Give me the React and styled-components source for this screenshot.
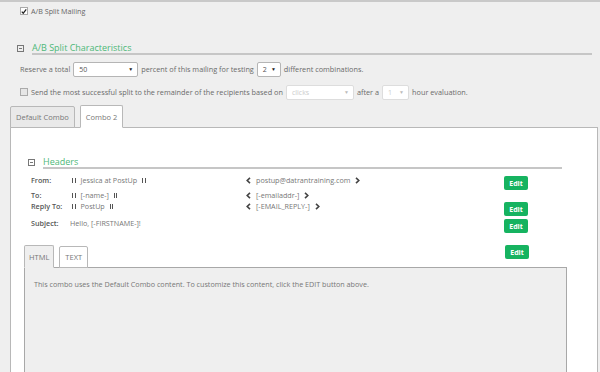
import React from 'react'
import styled, { createGlobalStyle } from 'styled-components';

const Global = createGlobalStyle`
    html, body {
        margin: 0;
        padding: 0;
        background: #efefef;
        font-family: "Open Sans", "Liberation Sans", sans-serif;
        color: #6a6a6a;
    }
`;

const Page = styled.div`
    width: 600px;
    height: 372px;
    overflow: hidden;
    border-top: 2px solid #c9c9c9;
    box-sizing: border-box;
    display: flex;
    flex-direction: column;
`;

const CheckRow = styled.label`
    display: flex;
    align-items: center;
    gap: 3px;
    padding: 4px 0 0 20px;
    height: 10px;
    font-size: 7.2px;
    color: #666;
`;

const Box = styled.span`
    width: 6px;
    height: 6px;
    border: 1px solid #aaa;
    background: ${p => (p.checked ? '#fff' : '#e6e6e6')};
    display: inline-flex;
    align-items: center;
    justify-content: center;
    flex: none;

    svg {
        width: 7px;
        height: 7px;
    }
`;

const SectionHead = styled.div`
    display: flex;
    align-items: flex-end;
    gap: 8px;
    margin: ${p => p.margin};
`;

const Toggle = styled.span`
    width: 5px;
    height: 5px;
    border: 1px solid #777;
    position: relative;
    margin-bottom: 3px;
    flex: none;

    &::after {
        content: '';
        position: absolute;
        left: 1px;
        right: 1px;
        top: 2px;
        height: 1px;
        background: #777;
    }
`;

const SectionTitle = styled.div`
    flex: 1;
    color: #4db878;
    font-size: 9px;
    line-height: 11px;
    border-bottom: 2px solid #c6c6c6;
`;

const FormRow = styled.div`
    display: flex;
    align-items: center;
    gap: 3px;
    padding-left: 20px;
    height: 16px;
    font-size: 7.3px;
    margin-top: ${p => p.top || 0}px;
`;

const Select = styled.span`
    display: inline-flex;
    align-items: center;
    justify-content: space-between;
    box-sizing: border-box;
    width: ${p => p.w}px;
    height: 15px;
    padding: 0 4px 0 5px;
    background: #fff;
    border: 1px solid ${p => (p.disabled ? '#ddd' : '#b5b5b5')};
    border-radius: 2px;
    color: ${p => (p.disabled ? '#ccc' : '#555')};
    font-size: 7px;

    &::after {
        content: '▼';
        font-size: 5px;
        color: ${p => (p.disabled ? '#bbb' : '#222')};
    }
`;

const TabBar = styled.div`
    display: flex;
    align-items: flex-end;
    gap: 5px;
    margin: ${p => p.margin};
    position: relative;
    z-index: 1;
`;

const Tab = styled.div`
    box-sizing: border-box;
    height: ${p => (p.active ? 23 : 22)}px;
    padding: 0 ${p => p.pad || 5}px;
    display: flex;
    align-items: center;
    font-size: 7.5px;
    color: #777;
    background: ${p => p.bg};
    border: 1px solid #b8b8b8;
    border-bottom: ${p => (p.active ? `1px solid ${p.bg}` : '1px solid #b8b8b8')};
    border-radius: 2px 2px 0 0;
    margin-bottom: -1px;
`;

const Panel = styled.div`
    flex: 1;
    margin: 0 2px 0 10px;
    background: #fff;
    border: 1px solid #b8b8b8;
    border-bottom: none;
    display: flex;
    flex-direction: column;
    padding: 28px 0 0 13px;
`;

const HeaderGrid = styled.div`
    display: grid;
    grid-template-columns: 41px 174px 258px 24px;
    grid-template-rows: 15px 11px 12px 18px;
    margin: 6px 0 0 7px;
    font-size: 7.2px;
`;

const Label = styled.span`
    grid-row: ${p => p.r};
    font-weight: 600;
    color: #555;
    line-height: 10px;
    align-self: start;
    margin-top: ${p => p.top || 0}px;
    white-space: nowrap;
`;

const Value = styled.span`
    grid-row: ${p => p.r};
    display: flex;
    align-items: center;
    gap: 5px;
    line-height: 10px;
    height: 10px;
    align-self: start;
    margin-top: ${p => p.top || 0}px;
    margin-left: ${p => p.left || 0}px;
    color: #777;
    white-space: nowrap;
`;

const Bars = styled.span`
    width: 1.5px;
    height: 5px;
    border-left: 1.5px solid #555;
    border-right: 1.5px solid #555;
`;

const Chevron = ({ dir }) => (
    <svg width="5" height="7" viewBox="0 0 5 7">
        <path
            d={dir === 'left' ? 'M4 0.8 L1.2 3.5 L4 6.2' : 'M1 0.8 L3.8 3.5 L1 6.2'}
            fill="none"
            stroke="#444"
            strokeWidth="1.6"
        />
    </svg>
);

const EditButton = styled.span`
    width: 24px;
    height: 14px;
    box-sizing: border-box;
    background: #16b360;
    color: #fff;
    font-size: 7px;
    font-weight: 700;
    border-radius: 2px;
    display: flex;
    align-items: center;
    justify-content: center;
    align-self: start;
    grid-column: 4;
    grid-row: ${p => p.r || 'auto'};
    margin-top: ${p => p.top || 0}px;
    margin-right: ${p => p.right || 0}px;
`;

const ContentTabs = styled(TabBar)`
    margin: 14px 30px 0 0;
    gap: 5px;

    ${EditButton} {
        margin-left: auto;
        align-self: flex-start;
    }
`;

const ContentBox = styled.div`
    flex: 1;
    margin: 0 30px 0 0;
    background: #efefef;
    border: 1px solid #a8a8a8;
    border-bottom: none;
    padding: 11px 9px;
    font-size: 7.2px;
    color: #777;
`;

const Check = () => (
    <svg viewBox="0 0 8 8">
        <path d="M1 4.2 L3 6.3 L7 1.2" fill="none" stroke="#222" strokeWidth="1.6" />
    </svg>
);

export default function App() {
    return (
        <Page>
            <Global />
            <CheckRow>
                <Box checked><Check /></Box>
                A/B Split Mailing
            </CheckRow>

            <SectionHead margin="26px 8px 0 17px">
                <Toggle />
                <SectionTitle>A/B Split Characteristics</SectionTitle>
            </SectionHead>

            <FormRow top={6}>
                Reserve a total
                <Select w={65}>50</Select>
                percent of this mailing for testing
                <Select w={24}>2</Select>
                different combinations.
            </FormRow>
            <FormRow top={7}>
                <Box />
                Send the most successful split to the remainder of the recipients based on
                <Select w={68} disabled>clicks</Select>
                after a
                <Select w={27} disabled>1</Select>
                hour evaluation.
            </FormRow>

            <TabBar margin="5px 0 0 10px">
                <Tab bg="#e9e9e9">Default Combo</Tab>
                <Tab bg="#fff" active>Combo 2</Tab>
            </TabBar>

            <Panel>
                <SectionHead margin="0 35px 0 4px">
                    <Toggle />
                    <SectionTitle>Headers</SectionTitle>
                </SectionHead>

                <HeaderGrid>
                    <Label r={1}>From:</Label>
                    <Value r={1}><Bars />Jessica at PostUp<Bars /></Value>
                    <Value r={1}><Chevron dir="left" />postup@datrantraining.com<Chevron /></Value>
                    <EditButton r={1} top={1}>Edit</EditButton>

                    <Label r={2}>To:</Label>
                    <Value r={2}><Bars />[-name-]<Bars /></Value>
                    <Value r={2}><Chevron dir="left" />[-emailaddr-]<Chevron /></Value>

                    <Label r={3}>Reply To:</Label>
                    <Value r={3}><Bars />PostUp<Bars /></Value>
                    <Value r={3}><Chevron dir="left" />[-EMAIL_REPLY-]<Chevron /></Value>
                    <EditButton r={3} top={1}>Edit</EditButton>

                    <Label r={4} top={5}>Subject:</Label>
                    <Value r={4} top={5} left={-2}>Hello, [-FIRSTNAME-]!</Value>
                    <EditButton r={4} top={6}>Edit</EditButton>
                </HeaderGrid>

                <ContentTabs>
                    <Tab bg="#efefef" active pad={4}>HTML</Tab>
                    <Tab bg="#fff" pad={5}>TEXT</Tab>
                    <EditButton right={38}>Edit</EditButton>
                </ContentTabs>
                <ContentBox>
                    This combo uses the Default Combo content. To customize this content, click the EDIT button above.
                </ContentBox>
            </Panel>
        </Page>
    )
}
